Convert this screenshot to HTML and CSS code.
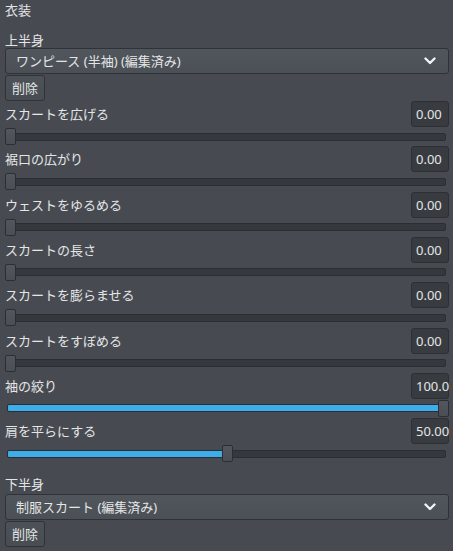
FILE: index.html
```html
<!DOCTYPE html>
<html lang="ja">
<head>
<meta charset="utf-8">
<link rel="stylesheet" href="styles.css">
</head>
<body>
<div class="panel">
  <div class="title">衣装</div>

  <div class="section-label">上半身</div>
  <div class="select">
    <span class="select-text">ワンピース (半袖) (編集済み)</span>
    <svg class="chev" width="12" height="8" viewBox="0 0 12 8"><polyline points="1.5,1.5 6,6 10.5,1.5" fill="none" stroke="#f2f2f2" stroke-width="2.4" stroke-linecap="round" stroke-linejoin="round"/></svg>
  </div>
  <div class="btn-row"><button class="btn">削除</button></div>

  <div class="rows">
    <div class="row">
      <div class="row-head"><span class="label">スカートを広げる</span><span class="value">0.00</span></div>
      <div class="slider"><div class="track"></div><div class="thumb" style="left:0%"></div></div>
    </div>
    <div class="row">
      <div class="row-head"><span class="label">裾口の広がり</span><span class="value">0.00</span></div>
      <div class="slider"><div class="track"></div><div class="thumb" style="left:0%"></div></div>
    </div>
    <div class="row">
      <div class="row-head"><span class="label">ウェストをゆるめる</span><span class="value">0.00</span></div>
      <div class="slider"><div class="track"></div><div class="thumb" style="left:0%"></div></div>
    </div>
    <div class="row">
      <div class="row-head"><span class="label">スカートの長さ</span><span class="value">0.00</span></div>
      <div class="slider"><div class="track"></div><div class="thumb" style="left:0%"></div></div>
    </div>
    <div class="row">
      <div class="row-head"><span class="label">スカートを膨らませる</span><span class="value">0.00</span></div>
      <div class="slider"><div class="track"></div><div class="thumb" style="left:0%"></div></div>
    </div>
    <div class="row">
      <div class="row-head"><span class="label">スカートをすぼめる</span><span class="value">0.00</span></div>
      <div class="slider"><div class="track"></div><div class="thumb" style="left:0%"></div></div>
    </div>
    <div class="row">
      <div class="row-head"><span class="label">袖の絞り</span><span class="value">100.0</span></div>
      <div class="slider"><div class="track"><div class="fill" style="width:100%"></div></div><div class="thumb" style="left:calc((100% - 11px) * 1)"></div></div>
    </div>
    <div class="row">
      <div class="row-head"><span class="label">肩を平らにする</span><span class="value">50.00</span></div>
      <div class="slider"><div class="track"><div class="fill" style="width:50%"></div></div><div class="thumb" style="left:calc((100% - 11px) * 0.5)"></div></div>
    </div>
  </div>

  <div class="section-label lower">下半身</div>
  <div class="select">
    <span class="select-text">制服スカート (編集済み)</span>
    <svg class="chev" width="12" height="8" viewBox="0 0 12 8"><polyline points="1.5,1.5 6,6 10.5,1.5" fill="none" stroke="#f2f2f2" stroke-width="2.4" stroke-linecap="round" stroke-linejoin="round"/></svg>
  </div>
  <div class="btn-row"><button class="btn">削除</button></div>
</div>
</body>
</html>
```

FILE: styles.css
```css
html, body {
  margin: 0;
  padding: 0;
  background: #474b51;
}

body {
  width: 453px;
  height: 551px;
  overflow: hidden;
  font-family: "Noto Sans", "Noto Sans CJK JP", sans-serif;
  font-size: 13px;
  color: #e4e5e6;
}

.panel {
  display: flex;
  flex-direction: column;
  padding: 2px 4px 0 5px;
}

.title {
  line-height: 16px;
  height: 16px;
}

.section-label {
  line-height: 16px;
  height: 16px;
  margin-top: 14px;
}

.section-label.lower {
  margin-top: 12px;
  margin-bottom: 2px;
}

.select {
  height: 26px;
  box-sizing: border-box;
  border: 1px solid #2f3337;
  border-radius: 3px;
  background: linear-gradient(#51565c, #4b5056);
  display: flex;
  align-items: center;
  justify-content: space-between;
  padding: 0 12px 0 10px;
}

.select-text {
  line-height: 16px;
}

.chev {
  display: block;
}

.btn-row {
  display: flex;
  margin-top: 1px;
}

.btn {
  height: 26px;
  width: 40px;
  box-sizing: border-box;
  border: 1px solid #2f3337;
  border-radius: 3px;
  background: linear-gradient(#4d5258, #484d53);
  color: #e4e5e6;
  font-family: inherit;
  font-size: 13px;
  padding: 0;
  line-height: 16px;
}

.rows {
  display: flex;
  flex-direction: column;
}

.row {
  height: 45.33px;
  display: flex;
  flex-direction: column;
}

.row-head {
  height: 26px;
  display: flex;
  align-items: center;
  justify-content: space-between;
}

.label {
  line-height: 16px;
}

.value {
  width: 38px;
  height: 26px;
  box-sizing: border-box;
  background: #383c41;
  border: 1px solid #2c2f33;
  border-radius: 3px;
  line-height: 24px;
  padding-left: 4px;
  white-space: nowrap;
  overflow: visible;
}

.slider {
  position: relative;
  height: 19px;
  display: flex;
  align-items: center;
}

.track {
  flex: 1;
  height: 8px;
  margin-left: 2px;
  margin-right: 3px;
  box-sizing: border-box;
  background: #35393d;
  border: 1px solid #2b2e32;
  border-radius: 2px;
  overflow: hidden;
}

.fill {
  height: 100%;
  background: #3daee9;
}

.thumb {
  position: absolute;
  top: 1px;
  width: 11px;
  height: 17px;
  box-sizing: border-box;
  background: linear-gradient(#52575d, #4a4f55);
  border: 1px solid #2b2e32;
  border-radius: 2px;
}
```
